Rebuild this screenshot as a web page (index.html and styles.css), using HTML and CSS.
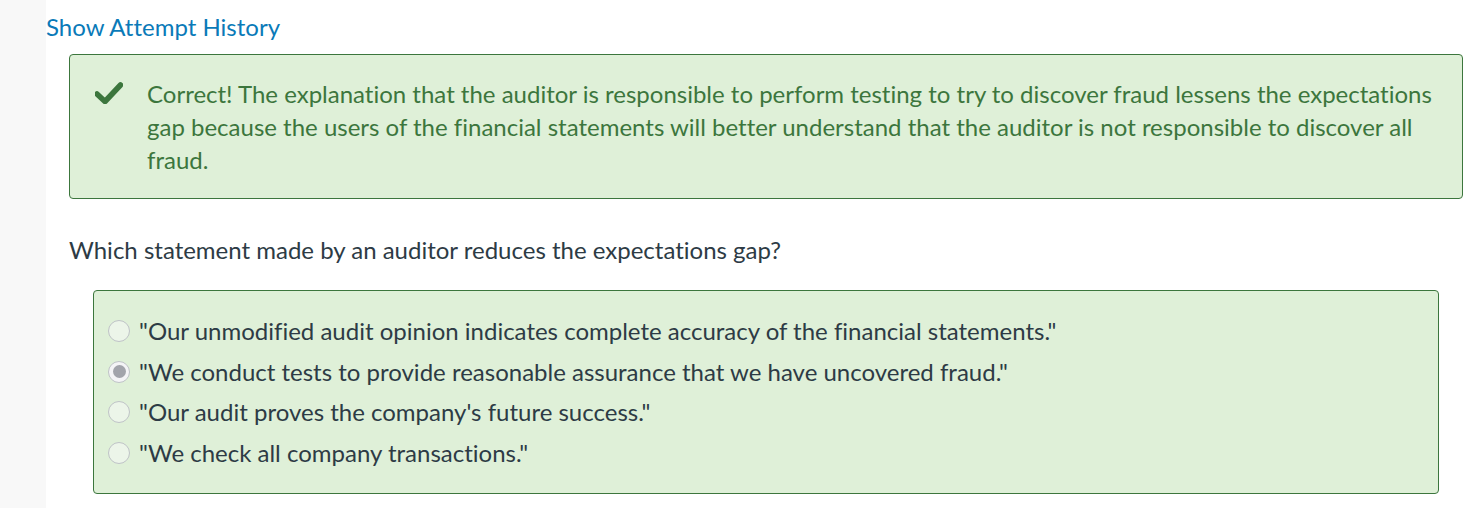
FILE: index.html
```html
<!DOCTYPE html>
<html lang="en">
<head>
    <meta charset="UTF-8">
    <meta name="viewport" content="width=device-width, initial-scale=1.0">
    <title>Quiz Results</title>
    <link rel="stylesheet" href="styles.css">
</head>
<body>
    <div class="page">
        <aside class="side"></aside>

        <main class="content">
            <a class="history-link" href="#">Show Attempt History</a>

            <div class="feedback">
                <svg class="check" viewBox="0 0 28 22" width="28" height="22" aria-hidden="true">
                    <path d="M2 12 L10 19.5 L25.5 3" fill="none" stroke="#3c763d" stroke-width="5.5" stroke-linecap="round" stroke-linejoin="round"/>
                </svg>
                <p>Correct! The explanation that the auditor is responsible to perform testing to try to discover fraud lessens the expectations gap because the users of the financial statements will better understand that the auditor is not responsible to discover all fraud.</p>
            </div>

            <p class="question">Which statement made by an auditor reduces the expectations gap?</p>

            <div class="answers">
                <label class="answer">
                    <span class="radio"></span>
                    "Our unmodified audit opinion indicates complete accuracy of the financial statements."
                </label>
                <label class="answer">
                    <span class="radio checked"></span>
                    "We conduct tests to provide reasonable assurance that we have uncovered fraud."
                </label>
                <label class="answer">
                    <span class="radio"></span>
                    "Our audit proves the company's future success."
                </label>
                <label class="answer">
                    <span class="radio"></span>
                    "We check all company transactions."
                </label>
            </div>
        </main>
    </div>
</body>
</html>
```

FILE: styles.css
```css
body {
    margin: 0;
    padding: 0;
    background-color: #fff;
    color: #2d3b45;
    font-family: Lato, "Open Sans", sans-serif;
    font-size: 24px;
    font-variant-ligatures: no-common-ligatures;
}
.page {
    display: flex;
    min-height: 508px;
}
.side {
    width: 46px;
    flex-shrink: 0;
    background-color: #f8f8f8;
}
.content {
    flex: 1;
    padding-top: 10px;
}
.history-link {
    display: block;
    color: #0a7ab8;
    text-decoration: none;
    line-height: 33px;
}
.feedback {
    display: flex;
    align-items: flex-start;
    margin: 11px 8px 0 23px;
    padding: 22px 20px 22px 25px;
    background-color: #dff0d8;
    border: 1px solid #3c763d;
    border-radius: 4px;
    color: #3c763d;
}
.feedback .check {
    flex-shrink: 0;
    margin-top: 5px;
    margin-right: 24px;
}
.feedback p {
    margin: 0;
    line-height: 33px;
}
.question {
    margin: 34px 0 0 23px;
    line-height: 33px;
}
.answers {
    margin: 24px 32px 0 47px;
    padding: 20px 14px;
    background-color: #dff0d8;
    border: 1px solid #3c763d;
    border-radius: 4px;
}
.answer {
    display: flex;
    align-items: center;
    gap: 9px;
    line-height: 40.5px;
}
.radio {
    width: 20px;
    height: 20px;
    border-radius: 50%;
    border: 1px solid #bfc3c7;
    background-color: #ecf5e9;
    flex-shrink: 0;
    position: relative;
}
.radio.checked {
    background-color: #f4f4f6;
}
.radio.checked::after {
    content: "";
    position: absolute;
    left: 3.5px;
    top: 3.5px;
    width: 13px;
    height: 13px;
    border-radius: 50%;
    background-color: #a2a4ab;
}
```
